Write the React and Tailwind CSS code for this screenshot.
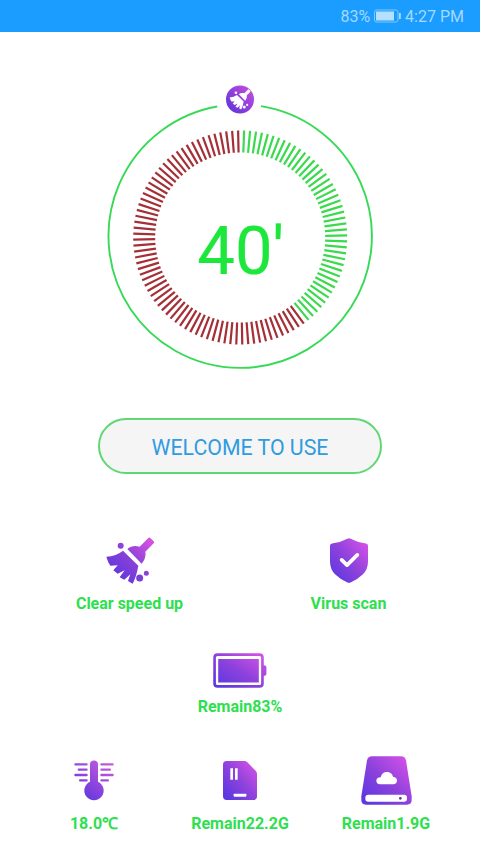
import React from "react";

const TICKS = 112;
const GREEN_TICKS = 44;

function Gradient({ id }) {
  return (
    <defs>
      <linearGradient id={id} x1="0" y1="1" x2="1" y2="0">
        <stop offset="0.1" stopColor="#5f38e0" />
        <stop offset="0.5" stopColor="#8e42dc" />
        <stop offset="0.95" stopColor="#d552e8" />
      </linearGradient>
    </defs>
  );
}

function BroomShape() {
  return (
    <>
      <circle cx="183" cy="49" r="9" />
      <circle cx="240" cy="146" r="10.500" />
      <circle cx="260" cy="132" r="7.500" />
      <path d="M266 26 Q269 23 272 26 L282 36 Q285 39 282 42 L257 67 C259 79 256 92 246 103 L203 59 C213 49 228 48 240 52 Z" />
      <path d="M190 64 L236 109 C232 130 228 146 219 163 L205 155 L212 135 L194 151 L180 144 L195 123 L174 133 L161 123 L174 108 L152 109 Q144 97 140 82 Q170 80 190 64 Z" />
    </>
  );
}

function BroomIcon() {
  return (
    <svg className="h-[47px] w-12" viewBox="139 23 144 141">
      <defs>
        <linearGradient id="broom" gradientUnits="userSpaceOnUse" x1="160" y1="150" x2="275" y2="35">
          <stop offset="0" stopColor="#5a35e0" />
          <stop offset="0.5" stopColor="#8a40d8" />
          <stop offset="1" stopColor="#d552e0" />
        </linearGradient>
      </defs>
      <g fill="url(#broom)">
        <BroomShape />
      </g>
    </svg>
  );
}

function ShieldIcon() {
  return (
    <svg className="h-[45px] w-[38px]" viewBox="120 26 114 134">
      <Gradient id="shield" />
      <path
        fill="url(#shield)"
        d="M172 28 Q177 25 182 28 Q204 40 228 42 Q234 43 234 49 V95 Q234 120 218 135 Q204 149 183 158 Q177 161 171 158 Q150 149 136 135 Q120 120 120 95 V49 Q120 43 126 42 Q150 40 172 28 Z"
      />
      <path d="M155 91 L171 107 L202 76" fill="none" stroke="#fff" strokeWidth="11" strokeLinecap="round" strokeLinejoin="round" />
    </svg>
  );
}

function BatteryIcon() {
  return (
    <svg className="h-[35px] w-[54px]" viewBox="99 39 162 106">
      <Gradient id="battery" />
      <path
        fill="url(#battery)"
        fillRule="evenodd"
        d="M112 40 H239 Q252 40 252 53 V76 Q260 76 260 83 V101 Q260 108 252 108 V131 Q252 144 239 144 H112 Q99 144 99 131 V53 Q99 40 112 40 Z M112 48 Q107 48 107 53 V131 Q107 136 112 136 H239 Q244 136 244 131 V53 Q244 48 239 48 Z M114 57 H237 V128 H114 Z"
      />
    </svg>
  );
}

function ThermometerIcon() {
  return (
    <svg className="h-[41px] w-10" viewBox="43 32 120 122">
      <defs>
        <linearGradient id="thermo" gradientUnits="userSpaceOnUse" x1="60" y1="150" x2="150" y2="35">
          <stop offset="0" stopColor="#5a35e0" />
          <stop offset="0.5" stopColor="#9448dc" />
          <stop offset="1" stopColor="#c85ce0" />
        </linearGradient>
      </defs>
      <g fill="url(#thermo)">
        <path d="M91 45 A12 12 0 0 1 115 45 V97 A29 29 0 1 1 91 97 Z" />
        <rect x="44" y="41" width="40" height="7" rx="3" />
        <rect x="54" y="57" width="30" height="7" rx="3" />
        <rect x="44" y="73" width="40" height="7" rx="3" />
        <rect x="58" y="89" width="26" height="7" rx="3" />
        <rect x="122" y="41" width="40" height="7" rx="3" />
        <rect x="122" y="57" width="32" height="7" rx="3" />
        <rect x="122" y="73" width="40" height="7" rx="3" />
        <rect x="122" y="89" width="26" height="7" rx="3" />
      </g>
    </svg>
  );
}

function CardIcon() {
  return (
    <svg className="h-[39px] w-[34px]" viewBox="128 30 102 117">
      <Gradient id="card" />
      <path fill="url(#card)" d="M139 30 H192 Q197 30 201 34 L226 59 Q230 63 230 68 V136 Q230 147 219 147 H139 Q128 147 128 136 V41 Q128 30 139 30 Z" />
      <path fill="#fff" d="M150 52 H158 V86 H150 Z M164 52 H172 V86 H164 Z" />
      <rect x="160" y="128" width="38" height="9" rx="2" fill="#fff" />
    </svg>
  );
}

function DriveIcon() {
  return (
    <svg className="h-[49px] w-[51px]" viewBox="90 18 153 147">
      <Gradient id="drive" />
      <path fill="url(#drive)" d="M123 19 H210 Q222 19 225 31 L242 139 V150 Q242 164 228 164 H105 Q91 164 91 150 V139 L108 31 Q111 19 123 19 Z" />
      <rect x="103" y="134" width="125" height="21" rx="9" fill="#fff" />
      <circle cx="208" cy="145" r="4" fill="#5b32a0" />
      <path fill="#fff" d="M147 103 Q136 101 136 92 Q137 82 149 82 Q153 66 168 66 Q182 66 186 80 Q198 82 198 92 Q197 102 187 103 Z" />
    </svg>
  );
}

function Gauge() {
  return (
    <svg className="h-[290px] w-[270px]" viewBox="105 82 270 290" fontFamily="Roboto, sans-serif">
      <defs>
        <linearGradient id="badge" x1="0" y1="1" x2="1" y2="0">
          <stop offset="0.1" stopColor="#6135d8" />
          <stop offset="0.9" stopColor="#c04be0" />
        </linearGradient>
      </defs>
      <path d="M261 106.150 A131.700 131.700 0 1 1 217.200 106.520" fill="none" stroke="#38d957" strokeWidth="1.900" />
      {Array.from({ length: TICKS }, (_, i) => (
        <line
          key={i}
          x1="240.200"
          x2="240.200"
          y1="130.500"
          y2="152.500"
          stroke={i < GREEN_TICKS ? "#3bd94d" : "#a52f36"}
          strokeWidth="2.200"
          transform={`rotate(${2.1 + (i * 360) / TICKS} 240.2 237.5)`}
        />
      ))}
      <circle cx="240" cy="99.500" r="14" fill="url(#badge)" />
      <g fill="#fff" transform="translate(229.500 89) scale(0.146) translate(-139 -23)">
        <BroomShape />
      </g>
      <text x="240.800" y="274" textAnchor="middle" fontSize="67" fill="#1de73c" stroke="#1de73c" strokeWidth="0.200">40'</text>
    </svg>
  );
}

function Item({ icon, label, className }) {
  return (
    <div className={`flex flex-col items-center ${className}`}>
      <div className="flex h-[50px] items-center justify-center">{icon}</div>
      <span className="whitespace-nowrap text-base leading-5 font-bold text-[#2de04e]">{label}</span>
    </div>
  );
}

export default function App() {
  return (
    <div className="flex h-[853px] w-[480px] flex-col overflow-hidden bg-white font-['Roboto',sans-serif]">
      <header className="flex h-8 items-center justify-end gap-1 bg-[#1b9cff] pt-0.5 pr-4 text-base text-[#a4daff]">
        <span>83%</span>
        <svg className="mb-0.5 h-3.5 w-[27px]" viewBox="0 0 27 14">
          <rect x="0.500" y="1" width="23.500" height="12" rx="2" fill="none" stroke="#7cc8fb" />
          <rect x="2" y="2.500" width="18" height="9" fill="#b5e1ff" />
          <rect x="25" y="4" width="1.800" height="6" fill="#a4daff" />
        </svg>
        <span>4:27 PM</span>
      </header>
      <main className="flex flex-col items-center pt-[50px]">
        <Gauge />
        <button className="mt-[46px] flex h-14 w-[284px] items-center justify-center rounded-full border-2 border-[#5fd873] bg-[#f5f5f5] pt-[3px] text-[21.300px] text-[#2f9ce0]">
          WELCOME TO USE
        </button>
        <div className="mt-[61px] flex w-full pr-[22px] pl-5">
          <Item className="w-[219px] gap-[9px]" icon={<BroomIcon />} label="Clear speed up" />
          <Item className="w-[219px] gap-[9px]" icon={<ShieldIcon />} label="Virus scan" />
        </div>
        <Item className="mt-[31px] gap-0.5" icon={<BatteryIcon />} label="Remain83%" />
        <div className="mt-[38px] flex w-full justify-center">
          <Item className="w-[146px] gap-[9px]" icon={<ThermometerIcon />} label="18.0℃" />
          <Item className="w-[146px] gap-[9px]" icon={<CardIcon />} label="Remain22.2G" />
          <Item className="w-[146px] gap-[9px]" icon={<DriveIcon />} label="Remain1.9G" />
        </div>
      </main>
    </div>
  );
}
